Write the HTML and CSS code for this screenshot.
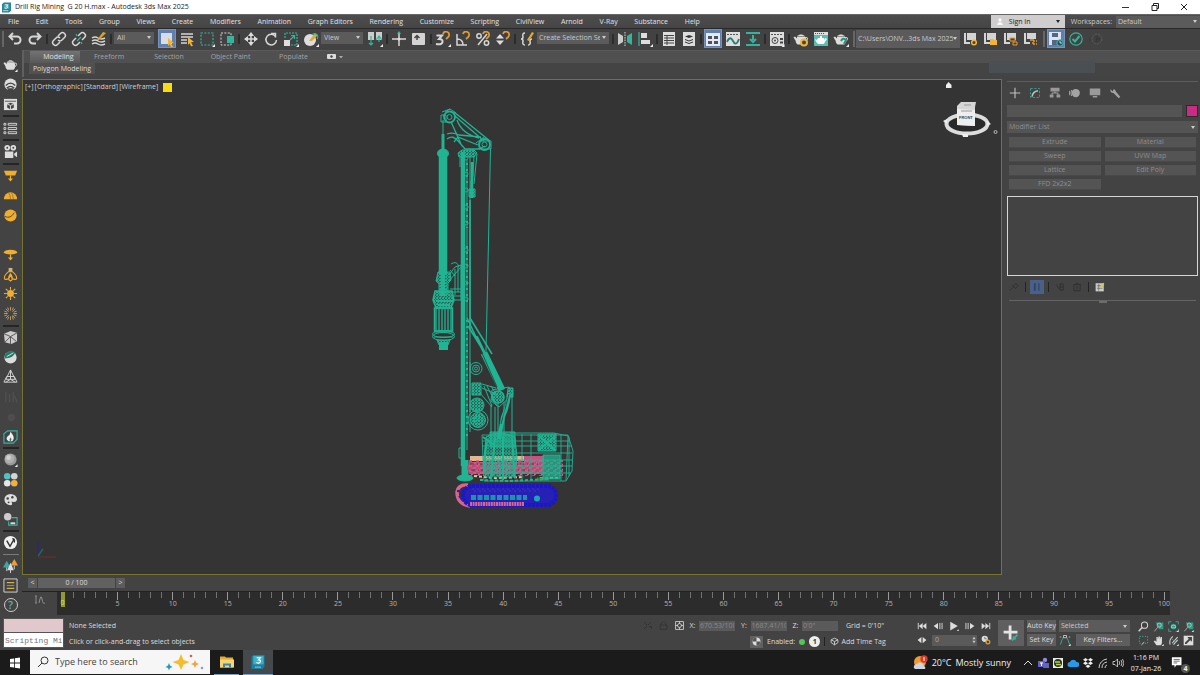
FILE: index.html
```html
<!DOCTYPE html>
<html lang="en">
<head>
<meta charset="utf-8">
<title>Drill Rig Mining G 20 H.max - Autodesk 3ds Max 2025</title>
<link rel="stylesheet" href="styles.css">
</head>
<body>
<svg class="sprite" aria-hidden="true">
  <defs>
    <symbol id="undo" viewBox="0 0 16 16"><path d="M6 2L2.500 5.500L6 9M3 5.500H10a3.500 3.500 0 0 1 0 7H7" class="l2"/></symbol>
    <symbol id="redo" viewBox="0 0 16 16"><path d="M10 2l3.500 3.500L10 9M13 5.500H6a3.500 3.500 0 0 0 0 7h3" class="l2"/></symbol>
    <symbol id="link" viewBox="0 0 16 16"><path d="M7 5l2.500-2.500a2.700 2.700 0 0 1 4 4L11 9a2.700 2.700 0 0 1-4 0M9 11l-2.500 2.500a2.700 2.700 0 0 1-4-4L5 7a2.700 2.700 0 0 1 4 0" class="l15"/></symbol>
    <symbol id="unlink" viewBox="0 0 16 16"><path d="M7 5l2.500-2.500a2.700 2.700 0 0 1 4 4L11 9M9 11l-2.500 2.500a2.700 2.700 0 0 1-4-4L5 7" class="l15"/><path d="M5 3l1 2M11 13l-1-2M6 10l4-4" class="t1"/></symbol>
    <symbol id="bind" viewBox="0 0 16 16"><path d="M1 7q3-2 6 0t7 0M1 10q3-2 6 0t7 0M1 13q3-2 6 0t7 0" class="l15"/><path d="M6 9l6-8 3 1-7 7z" fill="#d9a32e"/></symbol>
    <symbol id="selobj" viewBox="0 0 16 16"><path d="M2 2h11v11H2z" fill="#d8dce6"/><path d="M9 7l6 5-3 .3L14 16l-2 .3-1.400-3L9 15z" fill="#f0b43a"/></symbol>
    <symbol id="selname" viewBox="0 0 16 16"><path d="M2 3h12M2 6h12M2 9h6M2 12h6" class="l15"/><path d="M9 6l6 5-3 .3L14 15l-2 .3-1.400-3L9 14z" fill="#f0b43a"/></symbol>
    <symbol id="rectsel" viewBox="0 0 16 16"><path d="M2 2h12v12H2z" class="t1" stroke-dasharray="2 1.400"/><path d="M16 13v3h-3z" fill="#eee"/></symbol>
    <symbol id="winsel" viewBox="0 0 16 16"><path d="M2 2h10v12H2z" class="l1" stroke-dasharray="2 1.400"/><path d="M8 5h7v7H8z" fill="#35b39c"/></symbol>
    <symbol id="move" viewBox="0 0 16 16"><path d="M8 2v12M2 8h12" class="l15"/><path d="M8 1l3 4H5zM8 15l3-4H5zM1 8l4-3v6zM15 8l-4-3v6z" fill="#ddd"/></symbol>
    <symbol id="rotate" viewBox="0 0 16 16"><path d="M12.500 5.500A5.300 5.300 0 1 0 13.500 9M8 2.500h4.500v4" class="l15"/></symbol>
    <symbol id="scale" viewBox="0 0 16 16"><path d="M2 7V2h12v12H8" class="t1" stroke-dasharray="2 1"/><path d="M1 9h6v6H1z" fill="#ddd"/><path d="M7 9l4-4M8 4.500h3.500V8" class="t1"/><path d="M16 13v3h-3z" fill="#eee"/></symbol>
    <symbol id="place" viewBox="0 0 16 16"><circle cx="7" cy="9" r="6" fill="#ddd"/><path d="M6 10L12 2l3 2-6 6z" fill="#e0a83a"/><path d="M9 4a3 3 0 0 1 5 4" class="t1"/><path d="M16 13v3h-3z" fill="#eee"/></symbol>
    <symbol id="pivot" viewBox="0 0 16 16"><path d="M1 1h6v8H1zM9 1h6v8H9z" fill="#c9cdcc"/><path d="M4 5v9M2 12l2 2 2-2M9 9l3-4 3 4M12 5v6" class="t1"/><path d="M16 13v3h-3z" fill="#eee"/></symbol>
    <symbol id="manip" viewBox="0 0 16 16"><path d="M8 1v14M1 8h14" class="l15"/><circle cx="8" cy="8" r="1.500" fill="#ddd"/><path d="M6.500 3L8 1l1.500 2" class="t1"/></symbol>
    <symbol id="kbd" viewBox="0 0 16 16"><rect x="1" y="2" width="13" height="12" rx="1" fill="#d4d4d4"/><path d="M3.500 7l2.500-2.500L8.500 7M6 5v4" stroke="#444" fill="none" stroke-width="1.500"/></symbol>
    <symbol id="magnet" viewBox="0 0 16 16"><path d="M8 3a3 3 0 0 1 6 1.500c0 1-1 2-3 3.500" fill="none" stroke="#e29a33" stroke-width="1.700"/></symbol>
    <symbol id="snap3" viewBox="0 0 16 16"><path d="M1.500 4.500h5.500L4 8q4 0 3.500 3T1 13" class="l2"/><use href="#magnet"/><path d="M16 13v3h-3z" fill="#eee"/></symbol>
    <symbol id="snapang" viewBox="0 0 16 16"><path d="M2 3v11h10M2 8q6 0 6 6" class="l15"/><use href="#magnet"/></symbol>
    <symbol id="snappct" viewBox="0 0 16 16"><circle cx="4" cy="5" r="2.200" class="l15"/><circle cx="11.500" cy="12" r="2.200" class="l15"/><path d="M12 3L3 14" class="l15"/><use href="#magnet"/></symbol>
    <symbol id="snapspin" viewBox="0 0 16 16"><path d="M5 3l4 4.500H1zM5 14l4-4.500H1z" fill="#ddd"/><use href="#magnet"/></symbol>
    <symbol id="braces" viewBox="0 0 16 16"><path d="M6 2Q3 2 4 6Q4 8 2 8Q4 8 4 10Q3 14 6 14M9 14q3 0 2-4q0-2 2-2" class="l15"/><path d="M8 9l5-8 2 1-5 8z" fill="#e0a83a"/></symbol>
    <symbol id="mirror" viewBox="0 0 16 16"><path d="M1 2l5 3v6l-5 3z" fill="#ccc"/><path d="M15 2l-5 3v6l5 3z" fill="#35b39c"/><path d="M8 1v14" class="l1" stroke-dasharray="1.500 1"/></symbol>
    <symbol id="align" viewBox="0 0 16 16"><path d="M2 1v14" class="t1"/><path d="M4 2h6v5H4zM4 9h9v4H4z" fill="#ddd"/><path d="M16 13v3h-3z" fill="#eee"/></symbol>
    <symbol id="layers" viewBox="0 0 16 16"><path d="M2 1h12v14H2z" fill="#ddd"/><path d="M3 4.500h10M3 7h10M3 9.500h10M3 12h10M6 4v10" stroke="#444" fill="none"/></symbol>
    <symbol id="stack" viewBox="0 0 16 16"><path d="M2 1h12v14H2z" fill="#ddd"/><path d="M4 5.500L8 4l4 1.500L8 7zM4 8l4 1.500L12 8v1l-4 1.500L4 9zM4 10.500L8 12l4-1.500v1L8 13l-4-1.500z" fill="#333"/></symbol>
    <symbol id="ribbon" viewBox="0 0 16 16"><path d="M1 2h14v13H1z" fill="#e6eaf0"/><path d="M3 5h4v3H3zM9 5h4v3H9zM3 10h4v3H3zM9 10h4v3H9z" fill="#485363"/></symbol>
    <symbol id="curve" viewBox="0 0 16 16"><path d="M1 1h14v14H1z" fill="#ddd"/><path d="M2 3.500h12" stroke="#555" stroke-dasharray="2 1"/><path d="M2 11q3-7 6-1t6-2" fill="none" stroke="#287c70" stroke-width="1.800"/></symbol>
    <symbol id="schem" viewBox="0 0 16 16"><path d="M1 2h14M1 14h14" stroke="#35b39c" stroke-width="2.200"/><path d="M8 4v5M5 8l3 3 3-3" class="t2"/></symbol>
    <symbol id="mated" viewBox="0 0 16 16"><path d="M1 1h14v14H1z" fill="#ddd"/><path d="M2 3.500h12" stroke="#555" stroke-dasharray="2 1"/><circle cx="6" cy="9.500" r="3" fill="#ddd" stroke="#444"/><circle cx="6" cy="9.500" r="1" fill="#444"/><path d="M11 7h3v2h-3zM11 10.500h3v2h-3z" fill="#444"/></symbol>
    <symbol id="teapot" viewBox="0 0 16 16"><path d="M4 5.500h8q2.500 4-.5 8h-7q-2-2-2-4L.5 6.500l1.500-1 2 2zM7 3.500h2l3 1.500H4z" fill="#ddd"/><path d="M12 6.500q3-.5 2.500 1.500T12 11" class="l1"/></symbol>
    <symbol id="rset" viewBox="0 0 16 16"><use href="#teapot"/><circle cx="11" cy="11.500" r="3" fill="#464545" stroke="#f0b43a" stroke-width="2"/></symbol>
    <symbol id="rframe" viewBox="0 0 16 16"><path d="M1 1h14v14H1z" fill="#56bfb0"/><path d="M1 1h14v3H1z" fill="#ddd"/><path d="M2 2.500h9" stroke="#555" stroke-dasharray="1 1"/><path d="M5 7h6q2 3 0 6H5Q3 12 2 8l2 1zM7 5h2v2H7zM12 7l2 1-2 3z" fill="#fff"/></symbol>
    <symbol id="rprod" viewBox="0 0 16 16"><use href="#teapot"/><path d="M8 10q2-4 5-1l-2 4" fill="none" stroke="#2f8f80" stroke-width="2"/><path d="M16 13v3h-3z" fill="#eee"/></symbol>
    <symbol id="proj1" viewBox="0 0 16 16"><path d="M1 2h2v9h4v2H1zM4 2h9v7H4z" fill="#d4d4d4"/><circle cx="11" cy="11.500" r="2.300" fill="#464545" stroke="#f0b43a" stroke-width="1.500"/></symbol>
    <symbol id="proj2" viewBox="0 0 16 16"><path d="M1 2h2v9h4v2H1zM4 2h9v7H4z" fill="#d4d4d4"/><path d="M7 8h3l1 1h3v5H7z" fill="#f0b43a"/></symbol>
    <symbol id="proj3" viewBox="0 0 16 16"><path d="M1 2h2v9h4v2H1zM4 2h9v7H4z" fill="#d4d4d4"/><path d="M7 7h5v3H7zM10 11h4v3h-4z" fill="#464545" stroke="#e29a33"/></symbol>
    <symbol id="proj4" viewBox="0 0 16 16"><path d="M1 2h2v9h4v2H1zM4 2h9v6H4z" fill="#d4d4d4"/><path d="M10 8v6M10 10h4M10 13h4M7 9h2" stroke="#e29a33" stroke-width="1.500" stroke-dasharray="2 1"/></symbol>
    <symbol id="save" viewBox="0 0 16 16"><path d="M1 1h12v13H1z" fill="#dbe3ee"/><path d="M4 2h6v4H4zM4 9h6v5H4z" fill="#526783"/><circle cx="12" cy="12" r="3.200" fill="#284f5c" stroke="#41c0b1"/><path d="M12 10v2h2" class="l1"/></symbol>
    <symbol id="check" viewBox="0 0 16 16"><circle cx="8" cy="8" r="6.200" class="t1"/><path d="M4.500 8l2.500 2.500L11.500 5" class="t2"/></symbol>
    <symbol id="ghost" viewBox="0 0 16 16"><circle cx="9" cy="8" r="5" fill="none" stroke="#5c5c5c" stroke-dasharray="2 1"/><path d="M1 7h2M1 9h2M8 5l4 3-4 3z" stroke="#393939" fill="#393939"/></symbol>
    <symbol id="tri" viewBox="0 0 16 16"><path d="M15.500 13v3h-3z" fill="#eee"/></symbol>

    <symbol id="helmet" viewBox="0 0 16 16"><circle cx="8" cy="8" r="6.500" fill="#ddd"/><path d="M3 9q5-5 10 0M4 12q4-4 8 0" fill="none" stroke="#444" stroke-width="1.500"/><path d="M5 12h6v4H5z" fill="#444344"/></symbol>
    <symbol id="boxwin" viewBox="0 0 16 16"><path d="M1 2h14v12H1z" fill="#ddd"/><path d="M2 4.500h12" stroke="#555"/><path d="M8 6l3.500 1.500v4L8 13l-3.500-1.500v-4z" fill="#444"/><path d="M4.500 7.500L8 9l3.500-1.500M8 9v4" stroke="#ddd" fill="none"/></symbol>
    <symbol id="rows" viewBox="0 0 16 16"><path d="M1 2.500h2v2H1zM1 7h2v2H1zM1 11.500h2v2H1zM5.500 2.500h9v2h-9zM5.500 7h9v2h-9zM5.500 11.500h9v2h-9z" class="l1"/></symbol>
    <symbol id="cam" viewBox="0 0 16 16"><circle cx="4.500" cy="4" r="3" fill="#ddd"/><circle cx="11" cy="4" r="3" fill="#ddd"/><circle cx="4.500" cy="4" r="1" fill="#444"/><circle cx="11" cy="4" r="1" fill="#444"/><path d="M2 8h9v7H2zM12 10l3-2v6l-3-2z" fill="#ddd"/></symbol>
    <symbol id="lplane" viewBox="0 0 16 16"><path d="M1 3h14l-2 5H3z" fill="#efae2e"/><path d="M8 8v5M6 11l2 2.500L10 11" class="y1"/></symbol>
    <symbol id="ldome" viewBox="0 0 16 16"><path d="M1 12a7 7.500 0 0 1 14 0z" fill="#efae2e"/><path d="M8 12q0-4-2-7M11 12q0-4-2-7" stroke="#7a602c" fill="none" stroke-width=".7"/></symbol>
    <symbol id="lball" viewBox="0 0 16 16"><circle cx="8" cy="8" r="6.500" fill="#efae2e"/><path d="M2 9q6 3 10-4" stroke="#594722" fill="none"/></symbol>
    <symbol id="ldisc" viewBox="0 0 16 16"><ellipse cx="8" cy="5.500" rx="7" ry="2.500" fill="#efae2e"/><path d="M8 8v5M6 11l2 2.500L10 11" class="y1"/></symbol>
    <symbol id="lies" viewBox="0 0 16 16"><path d="M6 1h4v4H6z" fill="#d6b56a"/><path d="M6 5Q0 10 2 13q4 1 6-4 2 5 6 4 2-3-4-8zM8 7q-4 6 0 8 4-2 0-8" class="y1"/></symbol>
    <symbol id="lsun" viewBox="0 0 16 16"><circle cx="8" cy="8" r="3.700" fill="#efae2e"/><path d="M8 1v3M8 12v3M1 8h3M12 8h3M3 3l2 2M11 11l2 2M3 13l2-2M11 5l2-2" class="y1"/></symbol>
    <symbol id="lrays" viewBox="0 0 16 16"><path d="M8 1v4M8 11v4M1 8h4M11 8h4M3 3l3 3M10 10l3 3M3 13l3-3M10 6l3-3M5 1.500l1 3M10 11l1 3.500M1.500 5.500l3 1M11.500 9.500l3 1M11 1.500L10 4.500M5 14.500l1-3M1.500 10.500l3-1M14.500 5.500l-3 1" stroke="#d6a853" fill="none" stroke-width=".9"/></symbol>
    <symbol id="cube" viewBox="0 0 16 16"><path d="M1 4l7-3 7 2v9l-6 3-7-2z" fill="#ccc"/><path d="M1 4l7 3 7-4M8 7v8M2 13l6-6l6 5" stroke="#555" fill="none"/></symbol>
    <symbol id="fur" viewBox="0 0 16 16"><circle cx="8" cy="8" r="6.500" fill="#ddd"/><path d="M2 9a6.500 6.500 0 0 1 11-6Q11 9 2 9z" fill="#227e6a"/><path d="M4 7l7-4" stroke="#ddd"/></symbol>
    <symbol id="pyr" viewBox="0 0 16 16"><path d="M1 14L4 8h8l3 6zM8 1L3 11h10zM8 1v10M3 14l5-3 5 3" class="l1"/></symbol>
    <symbol id="dimbars" viewBox="0 0 16 16"><path d="M3 3v11M7 5v9M11 3v11M12 7l3 7" stroke="#4f4f4f" fill="none" stroke-width="1.500"/></symbol>
    <symbol id="dimdot" viewBox="0 0 16 16"><circle cx="9" cy="9" r="4" fill="#4d4d4d"/></symbol>
    <symbol id="fire" viewBox="0 0 16 16"><path d="M1 5l4-3h10v9l-4 4H1z" class="t1"/><path d="M8 3q6 7 2 10H6q-5-3 1-7z" fill="#eee"/><path d="M8 9q2 2 0 4-2-1 0-4z" fill="#3b7169"/></symbol>
    <symbol id="ball" viewBox="0 0 16 16"><circle cx="8" cy="8" r="6.500" fill="#999"/><circle cx="7" cy="7" r="5" fill="#b0b0b0"/><circle cx="6" cy="6" r="2.500" fill="#cfcfcf"/></symbol>
    <symbol id="balls" viewBox="0 0 16 16"><circle cx="4.500" cy="4.500" r="3.500" fill="#55bfc3"/><circle cx="12" cy="4.500" r="3.500" fill="#d4d4d4"/><circle cx="4.500" cy="12" r="3.500" fill="#e5e5e5"/><circle cx="12" cy="12" r="3.500" fill="#efb33c"/></symbol>
    <symbol id="palette" viewBox="0 0 16 16"><path d="M8 2a6.500 6 0 1 0 0 12q3 0 1-4 5 2 6-2A7 6 0 0 0 8 2z" fill="#ddd"/><circle cx="5" cy="7" r="1.300" fill="#444"/><circle cx="10" cy="5.500" r="1.300" fill="#444"/><circle cx="6" cy="11" r="1" fill="#444"/></symbol>
    <symbol id="baket" viewBox="0 0 16 16"><circle cx="5" cy="5" r="4" fill="#ccc"/><path d="M9 6h6v8H6v-4" class="t1"/><path d="M8 11h5v2H8z" fill="#ddd"/></symbol>
    <symbol id="vray" viewBox="0 0 16 16"><circle cx="8" cy="8" r="7" fill="#f1f1f1"/><path d="M4 6l3.500 6L12 4M10 4q3 0 2 4" fill="none" stroke="#333" stroke-width="1.500"/></symbol>
    <symbol id="trees" viewBox="0 0 16 16"><path d="M4 3l4 7H0z" fill="#35a9a7"/><path d="M12 1l4 7H8z" fill="#e5a03a"/><path d="M8 5l3.500 8h-7z" fill="#ddd"/><path d="M4 10v4M8 12v4M12 8v4" class="l1"/></symbol>
    <symbol id="listbox" viewBox="0 0 16 16"><path d="M1 1h14v14H1z" class="l1"/><path d="M4 5h8M4 11h8" stroke="#d8b13f" stroke-width="1.300"/><path d="M4 8h8" class="t1"/></symbol>

    <symbol id="plus" viewBox="0 0 16 16"><path d="M8 1v14M1 8h14" class="l15"/></symbol>
    <symbol id="modify" viewBox="0 0 16 16"><path d="M2 2h12v12H2z" class="t1" stroke-dasharray="3 2"/><path d="M4 13q1-7 8-8" class="l2"/></symbol>
    <symbol id="hier" viewBox="0 0 16 16"><path d="M2 1h12v5H2zM1 10h5v4H1zM10 10h5v4h-5z" fill="#a9a9a9"/><path d="M8 6v2M4 10V8h8v2" class="l1"/></symbol>
    <symbol id="motion" viewBox="0 0 16 16"><circle cx="9" cy="8" r="5.500" fill="#b4b4b4"/><path d="M3.500 4q-2 4 0 8M1 5q-1 3 0 6" class="l1"/></symbol>
    <symbol id="display" viewBox="0 0 16 16"><path d="M1 2h14v9H1zM5 12h6v2H5z" fill="#aaa"/></symbol>
    <symbol id="wrench" viewBox="0 0 16 16"><path d="M2 3l3 3 1-3q3 0 3 3l6 7-2 2-7-7Q1 8 2 3z" fill="#b4b4b4"/></symbol>

    <symbol id="tostart" viewBox="0 0 16 16"><path d="M2 3v10" class="l15"/><path d="M9 3L3 8l6 5zM15 3L9 8l6 5z" fill="#ddd"/></symbol>
    <symbol id="prevf" viewBox="0 0 16 16"><path d="M8 3L1 8l7 5z" fill="#ddd"/><path d="M11 3v10M14.500 3v10" class="l15"/></symbol>
    <symbol id="play" viewBox="0 0 16 16"><path d="M2 1l12 7-12 7z" fill="#ddd"/></symbol>
    <symbol id="loupe" viewBox="0 0 16 16"><circle cx="9.500" cy="6" r="4.500" class="l15"/><path d="M6 9.500L1 15" class="l2"/></symbol>
    <symbol id="zoomall" viewBox="0 0 16 16"><path d="M4 2h11v10H9z" fill="#2f9985"/><circle cx="9" cy="6" r="3" class="l1"/><path d="M7 9l-5 6" class="l1"/></symbol>
    <symbol id="zoomext" viewBox="0 0 16 16"><path d="M1 5V1h4M11 1h4v4M15 11v4h-4M5 15H1v-4" class="t1"/><circle cx="8" cy="8" r="4" fill="#2f9985"/><path d="M5 7l3-1 3 1v3H5z" class="l1"/></symbol>
    <symbol id="region" viewBox="0 0 16 16"><path d="M2 2h12v10H2z" class="t1" stroke-dasharray="2 2"/><path d="M5 15l4-5" class="l1"/></symbol>
    <symbol id="hand" viewBox="0 0 16 16"><path d="M5 15L1 9l2-1 2 2V3h2v4l1-5h2v5l1-4h2v8q0 3-2 4z" fill="#ddd"/></symbol>
    <symbol id="orbit" viewBox="0 0 16 16"><path d="M3 14Q1 7 7 2M6 12l8-9M8 14l6-7" class="l15"/><path d="M5 5l7 6" class="t1"/></symbol>
    <symbol id="maxv" viewBox="0 0 16 16"><path d="M1 1h14v14H1z" fill="#ddd"/><path d="M7 3h6v6h-2V7L5 13H3v-2l6-6H7z" fill="#444"/></symbol>
    <symbol id="mono" viewBox="0 0 16 16"><circle cx="8" cy="8" r="7" fill="#ddd"/><path d="M8 8V1a7 7 0 0 0-7 7zM8 8h7a7 7 0 0 1-7 7z" fill="#555"/></symbol>
    <symbol id="target" viewBox="0 0 16 16"><path d="M1 1h14v14H1z" class="l15"/><circle cx="8" cy="8" r="3.500" class="l15"/><path d="M8 1v4M8 11v4M1 8h4M11 8h4" class="l15"/></symbol>
    <symbol id="cubeo" viewBox="0 0 16 16"><path d="M8 2l6 3v5l-6 4-6-4V5zM2 5l6 3 6-3M8 8v6" class="l15"/></symbol>
    <symbol id="lock" viewBox="0 0 16 16"><path d="M4 7V4q4-4 8 0v3M2 7h12v8H2z" fill="none" stroke="#2f2f2f" stroke-width="1.500" stroke-dasharray="3 1"/></symbol>
    <symbol id="curvekey" viewBox="0 0 16 16"><path d="M2 14Q8-8 14 14" class="t1"/><path d="M6 2h4v3H6zM1 4h2M13 4h2" fill="#444" stroke="#ddd"/></symbol>
  </defs>
</svg>

<header class="titlebar">
  <svg class="applogo" viewBox="0 0 10 11"><path d="M2 0h8v9l-2 2H0V2z" fill="#2a8494"/><path d="M2 2h6v5H2z" fill="#49aebb"/><path d="M3.500 2.500h3L5 4.200q2 .2 1 1.500t-3 .3" stroke="#fff" fill="none"/><path d="M1 9h6" stroke="#c6e3e6"/></svg>
  <h1>Drill Rig Mining&nbsp; G 20 H.max - Autodesk 3ds Max 2025</h1>
  <div class="winctl">
    <button aria-label="Minimize"><svg viewBox="0 0 10 10"><path d="M1 5.500h7" stroke="#333"/></svg></button>
    <button aria-label="Restore"><svg viewBox="0 0 10 10"><path d="M2 3.500h5v5H2zM3.500 3.500v-2h5v5H7" stroke="#222" fill="none"/></svg></button>
    <button aria-label="Close"><svg viewBox="0 0 10 10"><path d="M2 2l6 6M8 2l-6 6" stroke="#222"/></svg></button>
  </div>
</header>

<nav class="menubar">
  <div class="menus">
    <button>File</button><button>Edit</button><button>Tools</button><button>Group</button><button>Views</button><button>Create</button><button>Modifiers</button><button>Animation</button><button>Graph Editors</button><button>Rendering</button><button>Customize</button><button>Scripting</button><button>CivilView</button><button>Arnold</button><button>V-Ray</button><button>Substance</button><button>Help</button>
  </div>
  <button class="signin"><svg viewBox="0 0 10 10"><circle cx="5" cy="3" r="2" fill="#fff"/><path d="M1 9q4-7 8 0z" fill="#fff"/></svg><span>Sign In</span><i class="caret"></i></button>
  <label class="wslabel" for="ws">Workspaces:</label>
  <select id="ws" class="dd ws"><option>Default</option></select>
</nav>

<div class="toolbar">
  <i class="grip"></i>
  <button class="tb" aria-label="Undo"><svg><use href="#undo"/></svg></button>
  <button class="tb" aria-label="Redo"><svg><use href="#redo"/></svg></button>
  <i class="sep"></i>
  <button class="tb" aria-label="Link"><svg><use href="#link"/></svg></button>
  <button class="tb" aria-label="Unlink"><svg><use href="#unlink"/></svg></button>
  <button class="tb" aria-label="Bind"><svg><use href="#bind"/></svg></button>
  <i class="sep"></i>
  <select class="dd filter" aria-label="Selection filter"><option>All</option></select>
  <button class="tb on" aria-label="Select object"><svg><use href="#selobj"/></svg></button>
  <button class="tb" aria-label="Select by name"><svg><use href="#selname"/></svg></button>
  <button class="tb" aria-label="Rectangular region"><svg><use href="#rectsel"/></svg></button>
  <button class="tb" aria-label="Window crossing"><svg><use href="#winsel"/></svg></button>
  <i class="sep"></i>
  <button class="tb" aria-label="Move"><svg><use href="#move"/></svg></button>
  <button class="tb" aria-label="Rotate"><svg><use href="#rotate"/></svg></button>
  <button class="tb" aria-label="Scale"><svg><use href="#scale"/></svg></button>
  <button class="tb" aria-label="Place"><svg><use href="#place"/></svg></button>
  <select class="dd coord" aria-label="Coordinate system"><option>View</option></select>
  <button class="tb" aria-label="Pivot"><svg><use href="#pivot"/></svg></button>
  <i class="sep"></i>
  <button class="tb" aria-label="Manipulate"><svg><use href="#manip"/></svg></button>
  <button class="tb" aria-label="Keyboard override"><svg><use href="#kbd"/></svg></button>
  <i class="sep"></i>
  <button class="tb" aria-label="Snaps"><svg><use href="#snap3"/></svg></button>
  <button class="tb" aria-label="Angle snap"><svg><use href="#snapang"/></svg></button>
  <button class="tb" aria-label="Percent snap"><svg><use href="#snappct"/></svg></button>
  <button class="tb" aria-label="Spinner snap"><svg><use href="#snapspin"/></svg></button>
  <i class="sep"></i>
  <button class="tb" aria-label="Edit selection sets"><svg><use href="#braces"/></svg></button>
  <select class="dd sets" aria-label="Selection sets"><option>Create Selection Se</option></select>
  <i class="sep"></i>
  <button class="tb" aria-label="Mirror"><svg><use href="#mirror"/></svg></button>
  <button class="tb" aria-label="Align"><svg><use href="#align"/></svg></button>
  <i class="sep"></i>
  <button class="tb" aria-label="Scene explorer"><svg><use href="#layers"/></svg></button>
  <button class="tb" aria-label="Layer explorer"><svg><use href="#stack"/></svg></button>
  <i class="sep"></i>
  <button class="tb on" aria-label="Toggle ribbon"><svg><use href="#ribbon"/></svg></button>
  <button class="tb" aria-label="Curve editor"><svg><use href="#curve"/></svg></button>
  <button class="tb" aria-label="Schematic view"><svg><use href="#schem"/></svg></button>
  <i class="sep"></i>
  <button class="tb" aria-label="Material editor"><svg><use href="#mated"/><use href="#tri"/></svg></button>
  <i class="sep"></i>
  <button class="tb" aria-label="Render setup"><svg><use href="#rset"/></svg></button>
  <button class="tb" aria-label="Rendered frame"><svg><use href="#rframe"/></svg></button>
  <button class="tb" aria-label="Render"><svg><use href="#rprod"/></svg></button>
  <i class="grip"></i>
  <select class="dd path" aria-label="Project folder"><option>C:\Users\ONV...3ds Max 2025</option></select>
  <button class="tb" aria-label="Project settings"><svg><use href="#proj1"/></svg></button>
  <button class="tb" aria-label="Open project"><svg><use href="#proj2"/></svg></button>
  <button class="tb" aria-label="Project structure"><svg><use href="#proj3"/></svg></button>
  <button class="tb" aria-label="Project tree"><svg><use href="#proj4"/></svg></button>
  <i class="grip"></i>
  <button class="tb on" aria-label="Autosave"><svg><use href="#save"/></svg></button>
  <button class="tb" aria-label="Status"><svg><use href="#check"/></svg></button>
  <button class="tb" aria-label="Run"><svg><use href="#ghost"/></svg></button>
</div>

<div class="work">
  <aside class="side">
    <button aria-label="Teapot"><svg><use href="#teapot"/><use href="#tri"/></svg></button>
    <button aria-label="Helmet"><svg><use href="#helmet"/></svg></button>
    <button aria-label="Box window"><svg><use href="#boxwin"/></svg></button>
    <hr>
    <button aria-label="List"><svg><use href="#rows"/></svg></button>
    <hr>
    <button aria-label="Camera"><svg><use href="#cam"/></svg></button>
    <hr>
    <button aria-label="Plane light"><svg><use href="#lplane"/></svg></button>
    <button aria-label="Dome light"><svg><use href="#ldome"/></svg></button>
    <button aria-label="Sphere light"><svg><use href="#lball"/></svg></button>
    <span class="gap"></span>
    <button aria-label="Disc light"><svg><use href="#ldisc"/></svg></button>
    <button aria-label="IES light"><svg><use href="#lies"/></svg></button>
    <button aria-label="Sun"><svg><use href="#lsun"/></svg></button>
    <button aria-label="Ambient light"><svg><use href="#lrays"/></svg></button>
    <hr>
    <button aria-label="Proxy"><svg><use href="#cube"/></svg></button>
    <button aria-label="Fur"><svg><use href="#fur"/></svg></button>
    <button aria-label="Clipper"><svg><use href="#pyr"/></svg></button>
    <button aria-label="Scatter" disabled><svg><use href="#dimbars"/></svg></button>
    <button aria-label="Metaball" disabled><svg><use href="#dimdot"/></svg></button>
    <button aria-label="Volume"><svg><use href="#fire"/></svg></button>
    <hr>
    <button aria-label="Material"><svg><use href="#ball"/><use href="#tri"/></svg></button>
    <button aria-label="Material set"><svg><use href="#balls"/></svg></button>
    <button aria-label="Palette"><svg><use href="#palette"/></svg></button>
    <button aria-label="Bake"><svg><use href="#baket"/></svg></button>
    <hr>
    <button aria-label="V-Ray"><svg><use href="#vray"/></svg></button>
    <hr class="pale">
    <button aria-label="Forest"><svg><use href="#trees"/></svg></button>
    <button aria-label="List box"><svg><use href="#listbox"/></svg></button>
    <button class="help" aria-label="Help"><b>?</b></button>
  </aside>

  <main class="center">
    <section class="ribbon">
      <div class="tabs">
        <button class="tab cur">Modeling</button><button class="tab">Freeform</button><button class="tab">Selection</button><button class="tab wide">Object Paint</button><button class="tab wide">Populate</button>
        <button class="tab rec" aria-label="Ribbon options"><svg viewBox="0 0 16 8"><rect x="0" y="1" width="9" height="5" rx="1" fill="#ddd"/><circle cx="4.500" cy="3.500" r="1.200" fill="#444"/><path d="M12 3h4l-2 2.500z" fill="#aaa"/></svg></button>
      </div>
      <div class="subtabs"><button>Polygon Modeling</button><span class="fade"></span></div>
    </section>

    <div class="stage">
      <section class="viewport">
        <svg class="scene" viewBox="23 80 978 494" preserveAspectRatio="xMidYMid meet">
          <defs>
            <pattern id="mesh" width="3" height="3" patternUnits="userSpaceOnUse"><path d="M0 0h3v3M0 3L3 0" stroke="#20b493" fill="none" stroke-width="1.100"/></pattern>
            <pattern id="bars" width="3" height="6" patternUnits="userSpaceOnUse"><path d="M1 0v6" stroke="#20b493" stroke-width="1.300"/></pattern>
            <pattern id="speck" width="7" height="5" patternUnits="userSpaceOnUse"><path d="M0 1h3M4 3h3M2 4.500h2" stroke="#dc5a86" stroke-width="1.400"/></pattern>
          </defs>
          <g class="wire">
            <circle cx="449.500" cy="117" r="5.500" stroke-width="1.800"/><circle cx="449.500" cy="117" r="2.500"/>
            <path d="M441 115h5v7h-5zM442 112l8-3M443 120v32M445 112l5-3 6 4"/>
            <path d="M454 112L490 141M455 116L484 141M451 122l7 15 20 8M457 120q5 14 22 18M447 134q6-2 12 1l22 2M447 139q6-5 12 3l6 7h14l6-3M458 137l-4 5M452 124l9 20" stroke-width="1.300"/>
            <circle cx="484.500" cy="144.500" r="5.500" stroke-width="1.800"/><circle cx="484.500" cy="144.500" r="2.500"/><path d="M480 141h11v8h-12zM476 143l8-6"/>
            <path d="M490.500 148L488.300 250L486 352"/>
            <path d="M443 134v16" stroke-width="3"/>
            <path d="M443 156v118" stroke-width="8.500"/>
            <ellipse cx="443" cy="153.500" rx="5.500" ry="4.500" fill="#20b493"/>
            <path d="M438 272h12l1 8-3 3v11h-9v-10l-3-3z" fill="url(#mesh)"/>
            <path d="M443 272v24" stroke-width="4"/>
            <path d="M435 291h17l2 9-3 8h-15l-3-8z" fill="url(#mesh)" stroke-width="1.500"/>
            <path d="M436 301h16M438 305h12" stroke-width="1.800"/>
            <path d="M434.500 308h18v23h-18z" fill="url(#bars)" stroke-width="1.500"/>
            <ellipse cx="443.500" cy="334" rx="11" ry="3.500"/><ellipse cx="443.500" cy="336.500" rx="11" ry="4"/><path d="M434 332h19M434 337h19M437 340h13l-2 5h-9z" fill="url(#mesh)"/>
            <path d="M443.500 342v8" stroke-width="9"/>
            <path d="M449 275l6-8 6-2v35M449 281l12-14M450 289h12M447 292h15M450 296h12M452 300h10M455 269v26M458 266v26M451 264q6-4 8 3M450 270l5 6"/>
            <path d="M463 152v314" stroke-width="4.500"/>
            <path d="M470 154v278M467 160v290"/><path d="M470 200v130" stroke-width="1.600"/>
            <path d="M467 163v20M467 203v25M467 246v60M467 320v120" stroke-width="2" stroke-dasharray="2 4"/>
            <circle cx="466" cy="158" r="2"/><circle cx="466" cy="174" r="2"/><circle cx="466" cy="190" r="2"/><circle cx="466" cy="207" r="2"/><circle cx="466" cy="223" r="2"/><circle cx="466" cy="250" r="2"/><circle cx="466" cy="266" r="2"/><circle cx="466" cy="283" r="2"/><circle cx="466" cy="299" r="2"/>
            <path d="M458 153l4-3h12l3 3-3 4h-15z" fill="url(#mesh)"/><path d="M460 157v10M474 156l-1 20-2 5v15M477 154l-3 30"/><path d="M472 162v36" stroke-width="2.500"/><path d="M469 189h6v8h-6z" fill="url(#mesh)"/>
            <path d="M467 318l21 44M470 318l22 36M468 326l16 26M477 336l26 54" stroke-width="1.500"/>
            <path d="M484 353l18 37" stroke-width="7"/><path d="M482 353l15 34" stroke="#343434" stroke-width=".8"/>
            <circle cx="476" cy="368.500" r="6"/><circle cx="476" cy="368.500" r="3.500"/><circle cx="476" cy="368.500" r="1.500"/><path d="M470 362v50"/>
            <path d="M472 383h9v12h-9z" fill="url(#mesh)"/><circle cx="477" cy="405" r="7" fill="url(#mesh)"/><circle cx="478" cy="420" r="10"/><circle cx="478" cy="420" r="7.500" fill="url(#mesh)"/><circle cx="478" cy="420" r="4"/><circle cx="478" cy="420" r="1"/>
            <path d="M482 384l14 4M482 388l14 6M480 393l12 14M484 386l8 20M487 386l10 20M491 386l6 10"/>
            <circle cx="498" cy="397" r="6" fill="url(#mesh)" stroke-width="1.700"/><path d="M492 390l17-3 4 7-14 13-8-6z"/>
            <path d="M508 388h5v9h-6z" fill="url(#mesh)"/><path d="M509 393q-1 13-6 24l-4 22" stroke-width="4"/><path d="M509 394l-8 30" stroke="#343434" stroke-width=".8"/>
            <path d="M491 405v36M495 407v34M498 403v36M504 402v38M512 394v46"/>
            <path d="M465 460v16" stroke-width="7"/><path d="M459 448h3v10h-3z"/><ellipse cx="465" cy="478" rx="8" ry="3" fill="#20b493"/>
          </g>
          <path d="M470 456h54v5h-54z" fill="#dfb990"/><path d="M524 456h20v6h-20z" fill="#cc4f83"/>
          <path d="M469 462h74v12h-74l-2-6z" fill="#b84c76"/><path d="M469 460h94v16h-94z" fill="url(#speck)"/><path d="M470 464h70M471 470h60" stroke="#3d4841" stroke-dasharray="4 3 1 2"/>
          <path d="M474 476l20 2 30-1M540 478h20" stroke="#ddc69a" stroke-width="2" stroke-dasharray="3 2"/><path d="M537 479h12" stroke="#467e25" stroke-width="3"/>
          <g class="wire">
            <path d="M482 435h86l5 16-1 20-6 10H484zM482 441h88M482 446h90M484 453h88M486 460h86M500 466h72M505 473h66M510 433h44l14 3-2 44M522 434v46M531 434v46M561 435v46M569 437v39" stroke-width=".9"/>
            <path d="M538 434h18v17h-18z" fill="url(#mesh)"/><path d="M539 436l16 14M539 450l16-14" stroke-width="2"/>
            <path d="M543 455h17v24h-17z" fill="#20b493" fill-opacity=".75"/>
            <path d="M486 437q12-8 29 0l2 20-3 20H486l-3-9z" fill="url(#mesh)" fill-opacity=".8"/><path d="M490 432h25v15h-25z" fill="#20b493" fill-opacity=".6"/><path d="M487 442q-3 14-3 32M495 437l-4 42M503 437v43M512 438l3 40M483 437l11 8" stroke-width="2"/>
            <path d="M480 480l30 1 38-2" stroke-dasharray="3 2" stroke-width="2"/>
          </g>
          <path d="M468 485q-10-1-11 7 0 12 13 14" stroke="#d9648c" stroke-width="3.500" fill="none"/>
          <rect x="463" y="486" width="93" height="19" rx="9" fill="#2620b4" stroke="#1d16c4" stroke-width="4" stroke-dasharray="3 1"/>
          <path d="M472 489h70M474 491h66" stroke="#3d38b8" stroke-dasharray="2 3"/>
          <path d="M471 497.500h56" stroke="#1795aa" stroke-width="5" stroke-dasharray="5 1.500"/><circle cx="537" cy="498.500" r="3" fill="#1aa6bd"/>
          <path d="M470 504h54" stroke="#d9648c" stroke-width="4" stroke-dasharray="2 .6"/><path d="M459 496l4 5M457 491h5" stroke="#2925a8" stroke-width="2"/>
          <path d="M38 557v-16" stroke="#26287c" stroke-width="1.500"/><path d="M38 557h18" stroke="#712b2e"/><path d="M38 556l5-7" stroke="#24694f" stroke-width="1.500"/>
          <path d="M946 85l2.500-3 3 3v3h-5.500z" fill="#eee"/>
          <ellipse cx="967" cy="124" rx="20.500" ry="9.500" fill="#292929" stroke="#dcdcdc" stroke-width="4"/><path d="M943 121l4-2v5zM991 124l-4-3v5zM962 134h6v3h-5z" fill="#eee"/>
          <path d="M957 106l4-4h15l-1 5v19l-18-1z" fill="#d5d5d5"/><path d="M957 109l18 1v16l-18-1z" fill="#eee"/><path d="M964 105h7M961 111h11" stroke="#999"/>
          <text x="959" y="119" class="face">FRONT</text><circle cx="995.500" cy="132" r="1.500" fill="none" stroke="#bbb"/>
        </svg>
        <div class="vplabel"><span>[+]</span><span>[Orthographic]</span><span>[Standard]</span><span>[Wireframe]</span><i></i></div>
      </section>

      <aside class="panel">
        <div class="ptabs">
          <button aria-label="Create"><svg><use href="#plus"/></svg></button><button aria-label="Modify" class="cur"><svg><use href="#modify"/></svg></button><button aria-label="Hierarchy"><svg><use href="#hier"/></svg></button><button aria-label="Motion"><svg><use href="#motion"/></svg></button><button aria-label="Display"><svg><use href="#display"/></svg></button><button aria-label="Utilities"><svg><use href="#wrench"/></svg></button>
        </div>
        <div class="namerow"><input type="text" aria-label="Object name"><button class="swatch" aria-label="Object color"></button></div>
        <select class="dd mods" aria-label="Modifier list"><option>Modifier List</option></select>
        <div class="modgrid">
          <button>Extrude</button><button>Material</button><button>Sweep</button><button>UVW Map</button><button>Lattice</button><button>Edit Poly</button><button>FFD 2x2x2</button>
        </div>
        <div class="modstack"></div>
        <div class="stackbar">
          <button aria-label="Pin"><svg viewBox="0 0 16 16"><path d="M1 14l6-6M5 5l6 6M7 7l4-5 4 4-5 4" stroke="#303030" fill="none" stroke-width="1.500"/></svg></button><i></i>
          <button aria-label="Show result" class="cur"><svg viewBox="0 0 16 16"><path d="M3 2h3v12H3zM10 2h2v12h-2z" fill="#2f4468"/></svg></button><i></i>
          <button aria-label="Make unique"><svg viewBox="0 0 16 16"><path d="M2 4l5 8M8 3h5v10H8zM8 8h5" stroke="#303030" fill="none" stroke-width="1.500"/></svg></button>
          <button aria-label="Remove"><svg viewBox="0 0 16 16"><path d="M2 4h12M3 4v10h10V4M6 2h4M8 6v6" stroke="#303030" fill="none" stroke-width="1.500"/></svg></button><i></i>
          <button aria-label="Configure"><svg viewBox="0 0 16 16"><path d="M1 2h13v13H1z" fill="#ccc"/><path d="M3 6h9M3 10h9M6 3v11" stroke="#555"/><path d="M7 9l6-8 2 2-6 7z" fill="#d3cf46"/></svg></button>
        </div>
        <div class="rollline"><i></i></div>
      </aside>
    </div>

    <div class="slider"><button>&lt;</button><button class="thumb">0 / 100</button><button>&gt;</button></div>
    <div class="track">
      <button class="mini" aria-label="Mini curve editor"><svg viewBox="0 0 12 10"><path d="M2 1v7M1 1h2M1 8h2M5 8q2-10 3-4t3 4" stroke="#8b8e90" fill="none"/></svg></button>
      <div class="ruler" id="ruler"></div>
    </div>
  </main>
</div>

<footer class="status">
  <div class="listener"><input class="pink" type="text" aria-label="Macro recorder"><input type="text" value="Scripting Mini" aria-label="Listener"></div>
  <div class="msgs"><p>None Selected</p><p>Click or click-and-drag to select objects</p></div>
  <div class="coords">
    <div class="crow">
      <button aria-label="Isolate"><svg viewBox="0 0 16 16"><path d="M2 2l5 5M14 2L9 7M2 14l5-5M11 10h4v4" stroke="#2b2b2b" fill="none" stroke-width="1.500" stroke-dasharray="3 1"/></svg></button><button aria-label="Lock"><svg><use href="#lock"/></svg></button><button aria-label="Absolute mode"><svg><use href="#target"/></svg></button>
      <label>X:<input type="text" value="670.53/100"></label><label>Y:<input type="text" value="1687.41/10"></label><label>Z:<input type="text" value="0'0&quot;"></label><span>Grid = 0'10"</span>
    </div>
    <div class="crow tags">
      <button class="box" aria-label="Adaptive"><svg><use href="#mono"/></svg></button><span>Enabled:</span><i class="dot"></i><b class="one">1</b><button class="cubeb" aria-label="Time tag"><svg><use href="#cubeo"/></svg></button><button class="txt">Add Time Tag</button>
    </div>
  </div>
  <div class="transport">
    <div class="trow">
      <button aria-label="Start"><svg><use href="#tostart"/></svg></button><button aria-label="Previous"><svg><use href="#prevf"/></svg></button><button aria-label="Play"><svg><use href="#play"/><use href="#tri"/></svg></button><button aria-label="Next"><svg class="flip"><use href="#prevf"/></svg></button><button aria-label="End"><svg class="flip"><use href="#tostart"/></svg></button>
    </div>
    <div class="trow">
      <button aria-label="Key mode"><svg viewBox="0 0 16 16"><path d="M7 3L1 8l6 5zM9 3l6 5-6 5z" fill="#ddd"/></svg></button><div class="spin"><input type="text" value="0" aria-label="Frame"><svg viewBox="0 0 6 10"><path d="M1 4l2-3 2 3zM1 6l2 3 2-3z" fill="#ccc"/></svg></div><button aria-label="Time configuration"><svg viewBox="0 0 16 16"><circle cx="6" cy="6" r="5" fill="#ddd"/><path d="M6 3v3h3" stroke="#444" fill="none"/><circle cx="11" cy="11" r="3" fill="#464545" stroke="#d9a32e" stroke-width="2"/></svg></button>
    </div>
  </div>
  <button class="bigkey" aria-label="Set keys"><svg viewBox="0 0 26 26"><path d="M12 5v15M5 12h15" stroke="#e4e4e4" stroke-width="3"/><path d="M14 21l6-6M15 17l3 3" stroke="#35b39c" stroke-width="2"/></svg></button>
  <div class="keys">
    <button>Auto Key</button><select class="dd" aria-label="Key selection"><option>Selected</option></select>
    <button>Set Key</button><div class="kf"><svg><use href="#curvekey"/><use href="#tri"/></svg><button>Key Filters...</button></div>
  </div>
  <div class="navs">
    <button aria-label="Zoom"><svg><use href="#loupe"/></svg></button><button aria-label="Zoom all"><svg><use href="#zoomall"/></svg></button><button aria-label="Zoom extents"><svg><use href="#zoomext"/><use href="#tri"/></svg></button><button aria-label="Zoom extents all"><svg><use href="#zoomall"/><use href="#tri"/></svg></button>
    <button aria-label="Region"><svg><use href="#region"/></svg></button><button aria-label="Pan"><svg><use href="#hand"/><use href="#tri"/></svg></button><button aria-label="Orbit"><svg><use href="#orbit"/><use href="#tri"/></svg></button><button aria-label="Maximize"><svg><use href="#maxv"/></svg></button>
  </div>
</footer>

<div class="taskbar">
  <button class="start" aria-label="Start"><svg viewBox="0 0 12 12"><path d="M1 2l4-.6V5.600H1zM5.800 1.300L11 .6v5H5.800zM1 6.400h4v4.200L1 10zM5.800 6.400H11v5l-5.200-.7z" fill="#fff"/></svg></button>
  <label class="search"><svg class="lens" viewBox="0 0 12 12"><circle cx="7.500" cy="4.500" r="3.500" fill="none" stroke="#333"/><path d="M5 7L1 11" stroke="#333"/></svg><input type="text" placeholder="Type here to search"><svg class="sparks" viewBox="0 0 42 18"><path d="M17 1l2.500 6 6 2-6 2.500L17 17l-2.500-5.500-6-2.500 6-2z" fill="#f4bd2c"/><path d="M31 7l1.200 2.800L35 11l-2.800 1.200L31 15l-1.200-2.800L27 11l2.800-1.200z" fill="#f0a63a"/><path d="M5 10l1 2.500L8.500 14 6 15l-1 2.500L4 15l-2.500-1L4 12.500z" fill="#239cb5"/><circle cx="27" cy="3" r="1.300" fill="#c1684d"/><circle cx="38" cy="15" r="1.300" fill="#8e9fb6"/></svg></label>
  <button class="app" aria-label="File Explorer"><svg viewBox="0 0 14 13"><path d="M0 1h5l1 1h7v10H0z" fill="#e0ac35"/><path d="M0 4h14v8H0z" fill="#f8d574"/><path d="M3 12V8h8v4H9v-2H5v2z" fill="#3a89b5"/></svg></button>
  <button class="app lit" aria-label="3ds Max"><svg viewBox="0 0 14 15"><path d="M2 0h12v12l-2 3H0V2z" fill="#1e7e9c"/><path d="M2 1h11v9H2z" fill="#3fb0c8"/><path d="M5.500 3h4L7.500 5.200q3 0 1.800 2.200t-4 .6" stroke="#fff" fill="none" stroke-width="1.200"/><path d="M4 13h6" stroke="#d6eef2" stroke-dasharray="1.500 .7"/></svg></button>
  <div class="tray">
    <div class="weather"><svg viewBox="0 0 15 15"><circle cx="7" cy="7" r="6" fill="#ef9b2d"/><path d="M1 13a3 3 0 0 1 3-4 4 4 0 0 1 7 2q2 1 1 3H2z" fill="#cdd3df"/><circle cx="11" cy="4" r="3.700" fill="#d63a2f"/><path d="M11 2v4" stroke="#fff"/></svg><span>20°C</span><span>Mostly sunny</span></div>
    <svg viewBox="0 0 12 12"><path d="M2 8l4-4 4 4" stroke="#ddd" fill="none"/></svg>
    <svg viewBox="0 0 12 12"><circle cx="8" cy="3" r="2.200" fill="#8c8be8"/><path d="M1 4h7v6H1zM8 6h4v5H6z" fill="#6264c4"/><path d="M3 6h3M4.500 6v3" stroke="#fff"/></svg>
    <svg viewBox="0 0 12 12"><path d="M1 1h10v10H1z" fill="#e8efe0"/><circle cx="6" cy="6" r="4" fill="#2b3427"/><path d="M3 5h5M9 7.500H4" stroke="#b8cf4f" stroke-width="1.500"/></svg>
    <svg viewBox="0 0 12 12"><path d="M3 10a2.500 2.500 0 0 1 0-5 3.500 3.500 0 0 1 6.500 0A2.500 2.500 0 0 1 10 10z" fill="#2799e8"/></svg>
    <svg viewBox="0 0 12 12"><path d="M3.500 1L6 2.800 3.500 4.500 1 2.800zM8.500 1L11 2.800 8.500 4.500 6 2.800zM3.500 4.500L6 6.300 3.500 8 1 6.300zM8.500 4.500L11 6.300 8.500 8 6 6.300zM6 7.500l2.500 1.700L6 11 3.500 9.200z" fill="#eee"/></svg>
    <svg viewBox="0 0 12 12"><path d="M2 11a9 9 0 0 1 8-9M5 11a6 6 0 0 1 5-6M8 11a3 3 0 0 1 2-3" stroke="#ccc" fill="none"/></svg>
    <svg viewBox="0 0 12 12"><path d="M1 4.500h2L5.500 2v8L3 7.500H1zM7 4q1.500 2 0 4M9 3q2 3 0 6M10.500 2q3 4 0 8" stroke="#ddd" fill="none" stroke-width=".8"/></svg>
    <div class="clock"><span>1:16 PM</span><span>07-Jan-26</span></div>
    <div class="note"><svg viewBox="0 0 16 14"><path d="M1 1h11v9H6l-2 3v-3H1z" fill="#fff"/><path d="M3 3.500h7M3 5.500h7M3 7.500h4" stroke="#333" stroke-width=".8"/></svg><b>4</b></div>
  </div>
</div>
<script src="app.js"></script>
</body>
</html>
```
FILE: app.js
```js
const ruler = document.getElementById("ruler");
for (let frame = 0; frame <= 100; frame++) {
  const cell = document.createElement("span");
  cell.className = frame === 0 ? "cell major now" : frame % 5 === 0 ? "cell major" : "cell";
  if (frame % 5 === 0) {
    const label = document.createElement("em");
    label.textContent = frame;
    cell.append(label);
  }
  ruler.append(cell);
}
```
FILE: styles.css
```css
* { box-sizing: border-box; }
body { margin: 0; min-height: 100vh; display: flex; flex-direction: column; background: #444344; color: #dcdcdc; font: 7px/10px "Open Sans", "Noto Sans", sans-serif; overflow-x: hidden; }
button, input, select { font: inherit; color: inherit; margin: 0; padding: 0; border: 0; background: none; border-radius: 0; min-width: 0; }
button { display: flex; align-items: center; justify-content: center; white-space: nowrap; }
svg { display: block; flex: none; }
h1, p { margin: 0; font-size: inherit; font-weight: 400; }
.sprite { position: absolute; width: 0; height: 0; }
.l1, .l15, .l2, .t1, .t2, .y1 { fill: none; stroke: #d6d6d6; stroke-width: 1; }
.l15 { stroke-width: 1.5; }
.l2 { stroke-width: 2; }
.t1, .t2 { stroke: #35b39c; stroke-width: 1.2; }
.t2 { stroke-width: 2; }
.y1 { stroke: #efae2e; stroke-width: 1.2; }
.dd { appearance: none; height: 12px; padding: 0 9px 0 3px; color: #c9c9c9; background: #5c5b5c url("data:image/svg+xml,%3Csvg xmlns='http://www.w3.org/2000/svg' viewBox='0 0 4 3'%3E%3Cpath d='M0 0h4L2 3z' fill='%23ccc'/%3E%3C/svg%3E") no-repeat right 3px center / 4px 3px; }

.titlebar { flex: none; height: 14px; display: flex; align-items: center; gap: 4px; padding-left: 2px; background: #fff; color: #222; }
.applogo { width: 9px; height: 11px; }
.winctl { margin-left: auto; display: flex; gap: 19px; padding-right: 11px; }
.winctl button, .winctl svg { width: 10px; height: 10px; }

.menubar { flex: none; height: 14px; display: flex; align-items: center; background: linear-gradient(#4e4d4e, #464546); border-top: 1px solid #666; }
.menus { display: flex; flex: 0 1 700px; justify-content: space-between; padding-left: 8px; margin-right: auto; color: #e2e2e2; }
.signin { width: 74px; height: 14px; padding: 0 5px; gap: 5px; justify-content: flex-start; background: #cfcdcd; color: #222; }
.signin svg { width: 8px; height: 9px; }
.caret { margin-left: auto; border: 2px solid transparent; border-top: 3px solid #222; border-bottom: 0; }
.wslabel { padding: 0 4px 0 6px; color: #c9c9c9; }
.ws { width: 84px; padding-left: 2px; }

.toolbar { flex: none; height: 22px; display: flex; align-items: center; padding-bottom: 2px; background: #434243; border-top: 1px solid #292929; }
.tb { flex: none; width: 20px; height: 19px; }
.tb svg { width: 16px; height: 16px; }
.tb.on { background: #5f7fae; border: 1px solid #7893bb; width: 18px; margin: 0 1px; }
.sep { flex: none; width: 2px; height: 10px; margin: 0 1px; background: #2c2c2c; }
.grip { flex: none; width: 2px; height: 16px; margin: 0 1px 0 2px; background: #666; }
.filter { width: 40px; margin: 0 3px 2px 1px; }
.coord { width: 42px; margin: 0 2px 2px 0; }
.sets { width: 72px; margin: 0 2px 2px 0; padding-left: 2px; }
.path { width: 104px; height: 18px; margin-right: 1px; padding: 0 7px 0 2px; }

.work { flex: 1; display: flex; min-height: 0; }
.side { flex: none; width: 22px; display: flex; flex-direction: column; align-items: center; padding: 5px 1px 0 0; }
.side button, .side .gap { flex: 1; }
.side svg { width: 15px; height: 15px; }
.side hr { width: 16px; height: 2px; margin: 1px 0; border: 0; background: #252525; }
.side hr.pale { background: #7a7a7a; height: 1px; }
.help b { width: 14px; height: 14px; border: 1px solid #ccc; border-radius: 50%; color: #5fb4a6; font-size: 11px; line-height: 12px; font-weight: 600; }

.center { flex: 1; display: flex; flex-direction: column; min-width: 0; }
.ribbon { flex: none; border-left: 2px solid #606060; margin-bottom: 2px; height: 27px; }
.tabs { display: flex; height: 13px; background: #515051; padding: 0 0 1px 6px; border-top: 1px solid #5b5a5b; }
.tab { width: 60px; color: #a3a3a3; padding-left: 2px; height: 12px; }
.tab.cur { width: 50px; padding-left: 7px; margin-right: -2px; background: linear-gradient(#747374, #5a595a); color: #e0e0e0; }
.tab.wide { width: 63px; }
.tab.rec { width: 20px; }
.rec svg { width: 16px; height: 8px; }
.subtabs { display: flex; height: 14px; padding: 0 0 0 5px; background: #454445; color: #ddd; }
.subtabs button { width: 66px; height: 11px; background: #525152; }
.fade { width: 106px; height: 12px; margin: -2px 105px 0 auto; background: #494f52; }

.stage { flex: 1; display: flex; min-height: 0; }
.viewport { flex: 1; position: relative; border: 1px solid #77742f; background: #353435; min-width: 0; }
.scene { position: absolute; inset: 0; width: 100%; height: 100%; }
.wire { fill: none; stroke: #20b493; stroke-width: 1; }
.face { font: 700 4px "Liberation Sans", sans-serif; fill: #444; }
.vplabel { position: absolute; left: 2px; top: 2px; display: flex; align-items: center; gap: 1px; color: #cfcfcf; }
.vplabel i { width: 9px; height: 9px; margin-left: 4px; background: #f7dc13; }

.panel { flex: none; width: 198px; padding: 2px 2px 0 5px; color: #8d8d8d; }
.ptabs { display: flex; height: 24px; padding-top: 1px; border-top: 1px solid #5d5d5d; }
.ptabs button { width: 20px; height: 19px; padding-right: 4px; }
.ptabs svg { width: 12px; height: 12px; opacity: .85; }
.namerow { display: flex; gap: 4px; margin-bottom: 4px; }
.namerow input { flex: 1; height: 12px; background: #555455; }
.swatch { width: 12px; height: 12px; background: #c92d83; border: 1px solid #2c2c2c; }
.mods { display: block; width: 100%; padding-left: 2px; color: #8d8d8d; background-color: #555455; }
.modgrid { display: grid; grid-template-columns: 1fr 1fr; gap: 3px 4px; padding: 4px 2px 6px; }
.modgrid button { height: 11px; background: #555455; border-bottom: 1px solid #4a494a; }
.modstack { height: 80px; border: 1px solid #d6d6d6; }
.stackbar { display: flex; align-items: center; height: 22px; gap: 3px; }
.stackbar button { width: 14px; height: 14px; }
.stackbar svg { width: 10px; height: 10px; }
.stackbar i { width: 1px; height: 10px; background: #242424; margin: 0 1px; }
.stackbar .cur { background: #4b6086; }
.rollline { display: flex; justify-content: center; border-top: 1px solid #656565; margin: 2px 2px 0; }
.rollline i { width: 8px; height: 2px; background: #6d6d6d; }

.slider { flex: none; height: 16px; display: flex; align-items: center; gap: 1px; padding: 1px 0 1px 6px; }
.slider button { width: 9px; height: 10px; background: #5d5c5d; }
.slider .thumb { width: 77px; background: #626162; }
.track { flex: none; display: flex; height: 24px; border-top: 1px solid #222; margin-right: 30px; }
.mini { width: 35px; align-items: flex-start; padding: 3px 0 0; }
.mini svg { width: 12px; height: 10px; }
.ruler { flex: 1; display: flex; background: #2d2c2d; }
.cell { flex: 1 1 0; min-width: 0; display: flex; flex-direction: column; align-items: center; }
.cell::before { content: ""; flex: none; width: 1px; height: 6px; background: #727272; }
.cell.major::before { height: 8px; background: #999; }
.cell em { font-style: normal; line-height: 8px; color: #b4b4b4; white-space: nowrap; }
.cell.now::before { width: 4px; height: 15px; background: #929b2c; }
.cell.now em { margin-top: -8px; color: #d7dc6d; position: relative; }

.status { flex: none; height: 35px; display: flex; align-items: flex-start; padding-top: 4px; color: #dcdcdc; }
.listener { width: 61px; margin: -1px 0 0 3px; display: flex; flex-direction: column; gap: 1px; border: 1px solid #555; background: #555; }
.listener input { width: 100%; height: 14px; background: #fff; color: #777; font: 8px "Liberation Mono", monospace; padding: 0 1px; }
.listener .pink { background: #e1c8cc; height: 13px; }
.msgs { flex: 1; padding: 2px 0 0 5px; display: flex; flex-direction: column; gap: 6px; white-space: nowrap; }
.coords { width: 244px; margin: 1px 32px 0 0; display: flex; flex-direction: column; gap: 4px; }
.crow { display: flex; align-items: center; height: 11px; white-space: nowrap; }
.crow svg { width: 9px; height: 9px; }
.crow > button { width: 16px; }
.crow label { display: flex; align-items: center; gap: 2px; width: 52px; }
.crow label:first-of-type { margin-left: 2px; }
.crow input { width: 36px; height: 10px; margin-left: auto; margin-right: 6px; background: #5b5a5b; color: #888; padding: 0 1px; }
.crow span { margin-left: 2px; }
.tags { padding-left: 106px; height: 13px; }
.tags .box { width: 13px; height: 12px; background: #616061; margin: 0 4px; flex: none; }
.tags .box + span { margin: 0 4px 0 0; }
.dot { width: 6px; height: 6px; border-radius: 50%; background: #58c25b; flex: none; }
.one { flex: none; width: 11px; height: 11px; margin: 0 4px; border-radius: 50%; background: #eee; color: #333; text-align: center; line-height: 11px; }
.tags .cubeb { width: 16px; border-left: 1px solid #222; margin-right: 3px; flex: none; padding-left: 4px; }
.tags .txt { width: auto; }
.transport { width: 76px; margin-right: 6px; }
.trow { display: flex; align-items: center; justify-content: space-between; height: 14px; }
.trow button { width: 12px; }
.trow svg { width: 10px; height: 10px; }
.flip { transform: scaleX(-1); }
.spin { flex: 1; display: flex; align-items: center; margin: 0 3px 0 4px; background: #5b5a5b; height: 11px; }
.spin input { width: 100%; padding-left: 3px; color: #aaa; }
.spin svg { width: 6px; height: 8px; }
.bigkey { width: 26px; height: 26px; margin: 1px 3px 0 0; background: #605f60; }
.bigkey svg { width: 24px; height: 24px; }
.keys { display: grid; grid-template-columns: 29px 71px; gap: 2px 3px; margin: 1px 6px 0 0; }
.keys button { height: 12px; background: #5f5e5f; }
.keys .dd { width: 100%; padding-left: 2px; }
.kf { display: flex; gap: 5px; align-items: center; }
.kf svg { width: 12px; height: 12px; }
.kf button { flex: 1; }
.navs { display: grid; grid-template-columns: repeat(4, 14px); gap: 0 1px; margin-right: 5px; }
.navs button { height: 14px; }
.navs svg { width: 11px; height: 11px; }

.taskbar { flex: none; height: 25px; display: flex; background: #1c1b1c; color: #f0f0f0; font-size: 9px; }
.start { width: 30px; }
.start svg { width: 12px; height: 12px; }
.search { width: 180px; height: 24px; display: flex; align-items: center; background: #f6f6f6; color: #333; padding-left: 7px; }
.lens { width: 12px; height: 12px; }
.search input { flex: 1; padding-left: 6px; }
.search input::placeholder { color: #444; opacity: 1; }
.sparks { width: 42px; height: 18px; margin-right: 4px; }
.app { width: 25px; margin: 0 0 0 4px; border-bottom: 1px solid #6ea7d3; }
.app svg { width: 14px; height: 14px; }
.app.lit { width: 30px; background: #45494c; }
.tray { margin-left: auto; display: flex; align-items: center; gap: 3px; }
.tray > svg { width: 12px; height: 12px; }
.weather { display: flex; align-items: center; gap: 4px; margin-right: 8px; white-space: nowrap; }
.weather svg { width: 15px; height: 15px; }
.clock { width: 32px; margin-left: 3px; display: flex; flex-direction: column; align-items: center; font-size: 7px; line-height: 11px; white-space: nowrap; }
.note { position: relative; margin: 0 12px 0 6px; padding-right: 3px; }
.note svg { width: 14px; height: 13px; }
.note b { position: absolute; right: -2px; bottom: -4px; width: 9px; height: 9px; border-radius: 50%; background: #555; font-size: 7px; line-height: 9px; text-align: center; }
```
